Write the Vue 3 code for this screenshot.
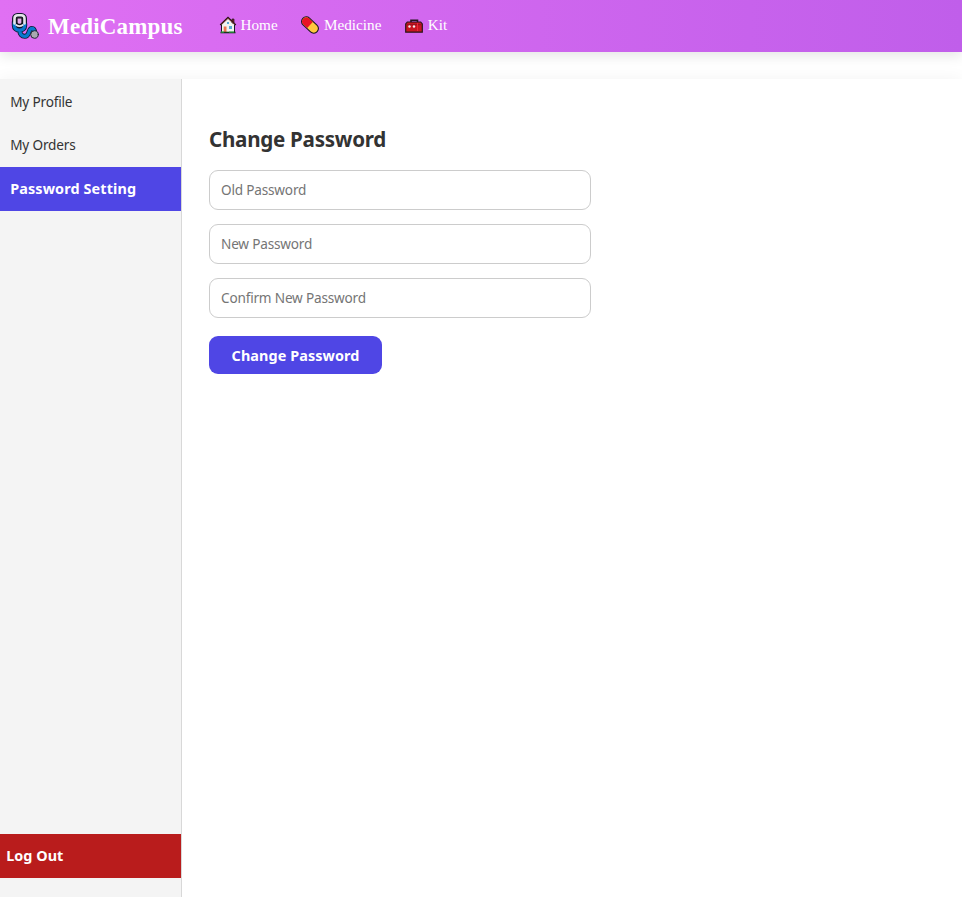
<script setup>
import { ref } from 'vue'

const fields = ref([
  { label: 'Old Password', key: 'old', value: '' },
  { label: 'New Password', key: 'new', value: '' },
  { label: 'Confirm New Password', key: 'confirm', value: '' },
])
</script>

<template>
  <div class="page">
    <header class="navbar">
      <div class="brand">
        <svg class="brand-icon" viewBox="0 0 28 28" fill="none" stroke-linecap="round" stroke-linejoin="round">
          <g stroke="#10182d" stroke-width="5">
            <rect x="3.500" y="3.500" width="10" height="10" rx="3" />
            <path d="M3.300 10v3.500c0 3 2.200 4.700 5.200 4.700s5.200-1.700 5.200-4.700V12M8.800 18.500c0 3.700 2.200 5.800 5 5.800 5.300 0 3.200-7.800 7-7.800 2.300 0 2.700 1.500 2.700 4" />
          </g>
          <path d="M3.300 11v2.500c0 3 2.200 4.700 5.200 4.700s5.200-1.700 5.200-4.700V12M8.800 18.500c0 3.700 2.200 5.800 5 5.800 5.300 0 3.200-7.800 7-7.800 2.300 0 2.700 1.500 2.700 4" stroke="#0878cf" stroke-width="3.300" />
          <path d="M3.500 11.500V6.500c0-2.200 1.300-3.300 3.300-3.300h3.400c2 0 3.300 1.100 3.300 3.300v5" stroke="#e6e5ea" stroke-width="2.600" />
          <path d="M6 5.800h5v4.700c0 2.600-5 2.600-5 0z" fill="#e5aceb" stroke="#17151a" stroke-width="1.200" />
          <path d="M5.200 13c2 1.500 4.600 1.500 6.600 0" stroke="#e6e5ea" stroke-width="1.700" />
          <circle cx="23.500" cy="22.500" r="3.800" fill="#a9a9b0" stroke="#202735" stroke-width="1" />
        </svg>
        <span class="brand-name">MediCampus</span>
      </div>
      <nav class="links">
        <a class="link home">
          <svg class="link-icon" viewBox="0 0 18 18">
            <path d="M2.500 8v8.500h13V8L9 2z" fill="#f2f2ee" stroke="#171923" stroke-width="1" />
            <path d="M13 3h2v4h-2z" fill="#8c2028" stroke="#201820" stroke-width=".7" />
            <path d="M1.300 9 9 1.700 16.700 9" fill="none" stroke="#23151b" stroke-width="1.700" />
            <path d="M2 8.700 9 2.200l7 6.500" fill="none" stroke="#b74639" stroke-width=".6" />
            <path d="M4.700 10.500h2.800V16H4.700z" fill="#ee7650" />
            <path d="M10 10h3v3h-3zM8 6h2v2H8z" fill="#5aa8d4" />
            <path d="M1.500 16.500h15" stroke="#173b20" stroke-width="1.600" />
            <path d="M2 16h3m5 0h5" stroke="#35b44d" />
          </svg>
          <span>Home</span>
        </a>
        <a class="link medicine">
          <svg class="link-icon" viewBox="0 0 18 18">
            <g transform="rotate(43 9 9)">
              <rect x="-.800" y="4.300" width="19.600" height="9.400" rx="4.700" fill="#ffc83d" stroke="#171623" stroke-width="1.100" />
              <path d="M9 4.900H4a4.100 4.100 0 0 0 0 8.200h5z" fill="#e81424" />
            </g>
          </svg>
          <span>Medicine</span>
        </a>
        <a class="link kit">
          <svg class="link-icon" viewBox="0 0 18 18">
            <path d="M6 6V4.300h6.500V6" fill="none" stroke="#23161c" stroke-width="1.600" />
            <path d="M2.300 6h13.400l1.600 2v8.200H.7V8z" fill="#c91520" stroke="#29171d" stroke-width="1.200" />
            <path d="M1.500 8.700h15" stroke="#91121e" />
            <circle cx="4.500" cy="10.500" r="1.200" fill="#f6eef0" />
            <circle cx="9" cy="10.500" r="1.200" fill="#f6eef0" />
            <path d="M12.500 7v8" stroke="#ef2736" stroke-width="1" />
          </svg>
          <span>Kit</span>
        </a>
      </nav>
    </header>
    <div class="layout">
      <aside class="sidebar">
        <a class="item profile">My Profile</a>
        <a class="item orders">My Orders</a>
        <a class="item active">Password Setting</a>
        <button class="logout">Log Out</button>
      </aside>
      <main class="content">
        <h2>Change Password</h2>
        <form @submit.prevent>
          <input v-for="field in fields" :key="field.key" v-model="field.value" :class="field.key" type="password" :placeholder="field.label">
          <button class="submit">Change Password</button>
        </form>
      </main>
    </div>
  </div>
</template>

<style>
body {
  background: #fff;
  overflow: hidden;
}
</style>

<style scoped>
.page {
  height: 100vh;
  display: flex;
  flex-direction: column;
  font-family: "Noto Sans", sans-serif;
  color: #333;
}
.navbar {
  height: 52px;
  flex: none;
  box-sizing: border-box;
  padding-left: 11px;
  display: flex;
  align-items: center;
  background: linear-gradient(90deg, #e070f3, #c05eea);
  box-shadow: 0 4px 12px rgba(0, 0, 0, .1);
  color: #fff;
  font-family: "Liberation Serif", serif;
}
.brand {
  width: 207.500px;
  display: flex;
  align-items: center;
  gap: 9px;
}
.brand-icon {
  width: 28px;
  height: 28px;
  overflow: visible;
}
.brand-name {
  padding-top: 1px;
  font-size: 23px;
  font-weight: 700;
  letter-spacing: .17px;
  line-height: 28px;
}
.links {
  display: flex;
  gap: 23.400px;
}
.link {
  display: flex;
  align-items: center;
  gap: 5px;
  font-size: 15.200px;
  line-height: 18px;
  margin-top: -2px;
}
.home {
  gap: 4px;
}
.link-icon {
  width: 18px;
  height: 18px;
  overflow: visible;
}
.layout {
  flex: 1;
  margin-top: 27px;
  display: flex;
  box-shadow: 0 0 16px rgba(0, 0, 0, .05);
}
.sidebar {
  width: 182px;
  box-sizing: border-box;
  display: flex;
  flex-direction: column;
  padding-bottom: 19px;
  background: #f4f4f4;
  border-right: 1px solid #d8d8d8;
}
.item {
  height: 44px;
  box-sizing: border-box;
  padding-left: 10.200px;
  font-size: 13.600px;
  letter-spacing: -.18px;
  line-height: 45px;
}
.orders {
  line-height: 43px;
}
.active {
  background: #4f46e5;
  color: #fff;
  font-weight: 700;
  font-size: 14.400px;
  letter-spacing: .12px;
  line-height: 43px;
}
.logout {
  height: 44px;
  margin-top: auto;
  padding: 0 0 0 6.200px;
  border: 0;
  background: #b91c1c;
  color: #fff;
  font: 700 14.400px/44px "Noto Sans", sans-serif;
  letter-spacing: .05px;
  text-align: left;
}
.content {
  flex: 1;
  padding: 45px 27px 0;
  background: #fff;
}
h2 {
  margin: 0 0 16px;
  font-size: 20.600px;
  line-height: 30px;
  font-weight: 700;
  letter-spacing: -.27px;
}
form {
  display: flex;
  flex-direction: column;
  align-items: flex-start;
  gap: 14px;
}
input {
  width: 382px;
  height: 40px;
  box-sizing: border-box;
  padding: 0 11px 1px;
  border: 1px solid #ccc;
  border-radius: 9px;
  font: 13.600px "Noto Sans", sans-serif;
  letter-spacing: -.19px;
}
input::placeholder {
  color: #757575;
}
.submit {
  width: 173px;
  height: 38px;
  margin-top: 4px;
  padding: 1px 0 0;
  border: 0;
  border-radius: 9px;
  background: #4f46e5;
  color: #fff;
  font: 700 14.400px/37px "Noto Sans", sans-serif;
  letter-spacing: .08px;
}
</style>
